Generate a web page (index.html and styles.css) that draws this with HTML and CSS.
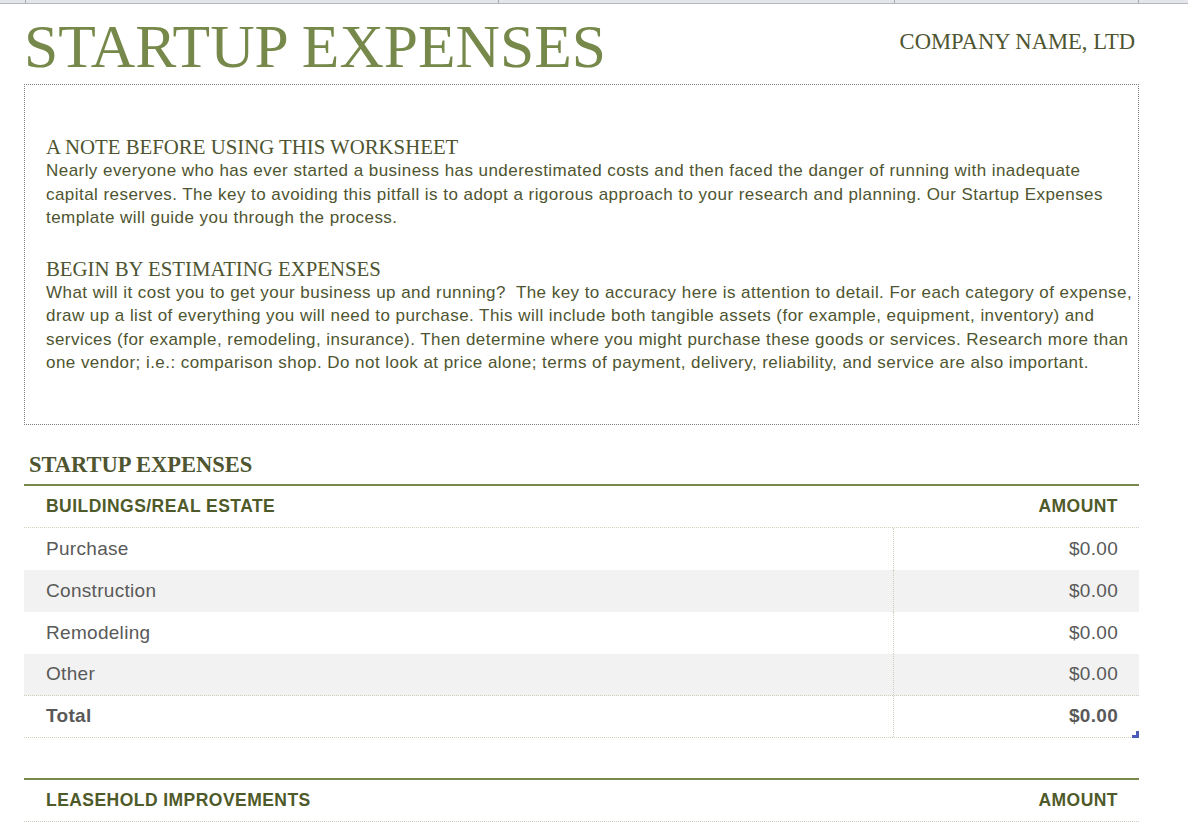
FILE: index.html
```html
<!DOCTYPE html>
<html>
<head>
<meta charset="utf-8">
<title>Startup Expenses</title>
<link rel="stylesheet" href="styles.css">
</head>
<body>
<div class="topbar">
  <span class="tick t1"></span><span class="tick t2"></span><span class="tick t3"></span><span class="tick t4"></span>
</div>
<div class="sheet">
  <header class="head">
    <h1 class="title">STARTUP EXPENSES</h1>
    <div class="company">COMPANY NAME, LTD</div>
  </header>

  <section class="note">
    <h2 class="note-h">A NOTE BEFORE USING THIS WORKSHEET</h2>
    <p class="note-p">Nearly everyone who has ever started a business has underestimated costs and then faced the danger of running with inadequate<br>capital reserves. The key to avoiding this pitfall is to adopt a rigorous approach to your research and planning. Our Startup Expenses<br>template will guide you through the process.</p>
    <h2 class="note-h second">BEGIN BY ESTIMATING EXPENSES</h2>
    <p class="note-p">What will it cost you to get your business up and running?&nbsp; The key to accuracy here is attention to detail. For each category of expense,<br>draw up a list of everything you will need to purchase. This will include both tangible assets (for example, equipment, inventory) and<br>services (for example, remodeling, insurance). Then determine where you might purchase these goods or services. Research more than<br>one vendor; i.e.: comparison shop. Do not look at price alone; terms of payment, delivery, reliability, and service are also important.</p>
  </section>

  <h3 class="section">STARTUP EXPENSES</h3>

  <div class="table">
    <div class="row hdr"><div class="c1">BUILDINGS/REAL ESTATE</div><div class="c2">AMOUNT</div></div>
    <div class="row"><div class="c1">Purchase</div><div class="c2 div">$0.00</div></div>
    <div class="row alt"><div class="c1">Construction</div><div class="c2 div">$0.00</div></div>
    <div class="row"><div class="c1">Remodeling</div><div class="c2 div">$0.00</div></div>
    <div class="row alt lined"><div class="c1">Other</div><div class="c2 div">$0.00</div></div>
    <div class="row total lined"><div class="c1">Total</div><div class="c2 div">$0.00</div></div>
    <span class="handle"><svg width="7" height="7" viewBox="0 0 7 7"><polygon points="4,0 7,0 7,7 0,7 0,4 4,4" fill="#4a5cb8"/></svg></span>
  </div>

  <div class="table second-table">
    <div class="row hdr"><div class="c1">LEASEHOLD IMPROVEMENTS</div><div class="c2">AMOUNT</div></div>
  </div>
</div>
</body>
</html>
```

FILE: styles.css
```css
html, body {
  margin: 0;
  padding: 0;
  background: #ffffff;
}

body {
  font-family: "Liberation Sans", Arial, sans-serif;
  overflow: hidden;
  height: 822px;
}

.topbar {
  position: relative;
  height: 3px;
  background: #e4e6ea;
  border-bottom: 1px solid #b3b7bf;
}

.tick {
  position: absolute;
  top: 0;
  width: 1px;
  height: 3px;
  background: #a4a8b0;
}
.t1 { left: 25px; }
.t2 { left: 498px; }
.t3 { left: 894px; }
.t4 { left: 1138px; }

.sheet {
  width: 1115px;
  margin-left: 24px;
}

.head {
  display: flex;
  justify-content: space-between;
  align-items: flex-start;
}

.title {
  margin: 12px 0 0 0;
  font-family: "Liberation Serif", "Times New Roman", serif;
  font-weight: normal;
  font-size: 61.5px;
  line-height: 60px;
  color: #76884a;
}

.company {
  margin: 27px 4px 0 0;
  font-family: "Liberation Serif", "Times New Roman", serif;
  font-size: 22.6px;
  line-height: 22px;
  color: #4e5530;
}

.note {
  margin-top: 8px;
  border: 1px dotted #7d7d7d;
  padding: 50px 4px 49px 21px;
  color: #4e5530;
}

.note-h {
  margin: 0;
  font-family: "Liberation Serif", "Times New Roman", serif;
  font-weight: normal;
  font-size: 20.8px;
  line-height: 24px;
  color: #4e5530;
}

.note-h.second {
  margin-top: 27px;
}

.note-p {
  margin: 0;
  font-size: 17px;
  letter-spacing: 0.45px;
  line-height: 23.5px;
  white-space: nowrap;
}

.section {
  margin: 27px 0 6px 5px;
  font-family: "Liberation Serif", "Times New Roman", serif;
  font-weight: bold;
  font-size: 22.5px;
  line-height: 26px;
  color: #4e5530;
}

.table {
  position: relative;
  border-top: 2px solid #76884a;
}

.second-table {
  margin-top: 40px;
}

.row {
  display: grid;
  grid-template-columns: 869px 1fr;
  height: 42px;
  box-sizing: border-box;
  font-size: 19px;
  letter-spacing: 0.3px;
  color: #595959;
}

.row.alt {
  background: #f2f2f2;
}

.row.lined,
.row.hdr {
  border-bottom: 1px dotted #cfcfbd;
}

.row.hdr {
  height: 42px;
  font-weight: bold;
  font-size: 17.5px;
  color: #4f5a2a;
  letter-spacing: 0.45px;
}

.row.total {
  font-weight: bold;
}

.c1 {
  display: flex;
  align-items: center;
  padding-left: 22px;
}

.c2 {
  display: flex;
  align-items: center;
  justify-content: flex-end;
  padding-right: 21px;
}

.c2.div {
  border-left: 1px dotted #cfcfbd;
}

.handle {
  position: absolute;
  right: 0;
  bottom: 0;
  width: 7px;
  height: 7px;
  line-height: 0;
}
```
